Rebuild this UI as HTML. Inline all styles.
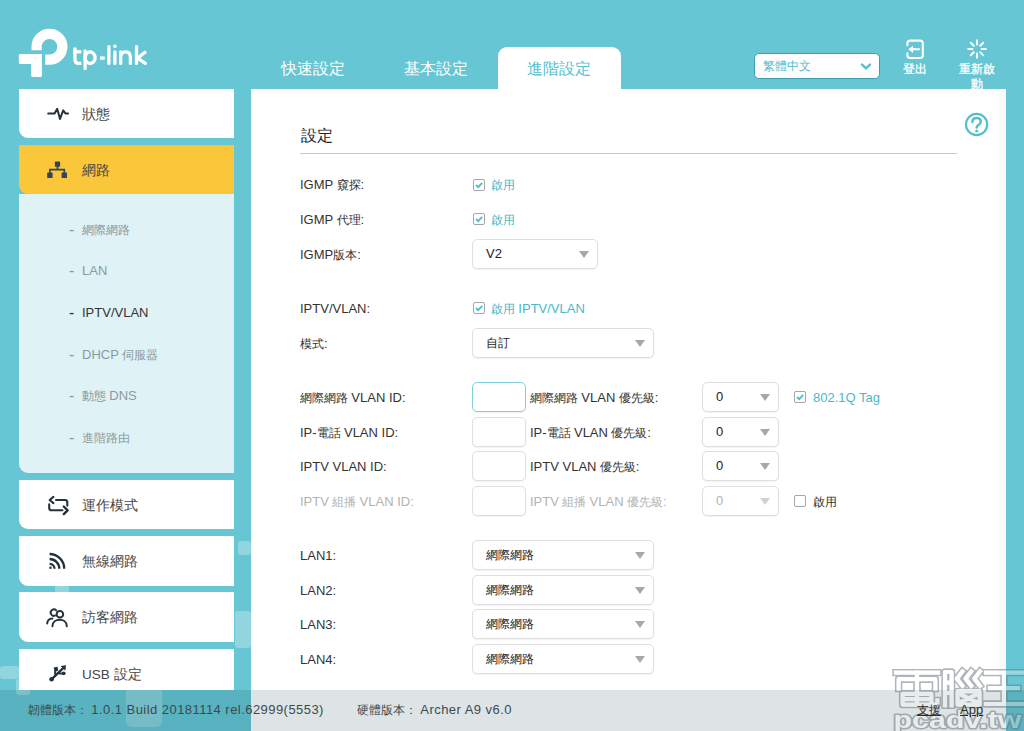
<!DOCTYPE html>
<html lang="zh-Hant">
<head>
<meta charset="utf-8">
<title>TP-Link Archer A9 - IPTV/VLAN</title>
<style>
*{box-sizing:border-box;margin:0;padding:0}
html,body{width:1024px;height:731px;overflow:hidden}
body{position:relative;background:#67c6d3;font-family:"Liberation Sans",sans-serif;font-size:12px;color:#333;line-height:1}
.abs{position:absolute}
.l{font-size:13px}
.c{display:inline-block;white-space:nowrap;text-align:justify;text-align-last:justify;text-justify:inter-character}
.hl{text-align:center;line-height:15px;font-size:12px;color:#fff;-webkit-text-stroke:.3px #fff}
.deco{position:absolute;background:rgba(255,255,255,.28);border-radius:3px}
.mi{position:absolute;left:19px;width:215px;height:49.75px;overflow:hidden;background:#fff;border-radius:0 0 0 9px}
.mi.on{background:#fbc73a}
.mi .tx{position:absolute;left:63px;top:0;height:50px;line-height:50px;font-size:14px;color:#464646;white-space:nowrap}
.mi .tx .l{font-size:13.5px}
.mi svg{position:absolute;overflow:visible}
.sub{position:absolute;left:19px;top:194.25px;width:215px;height:278.25px;background:#dff2f6;border-radius:0 0 0 9px}
.si{position:absolute;left:69px;height:20px;line-height:20px;font-size:12px;color:#8b9a9f;white-space:nowrap}
.si.on{color:#333}
.si b{font-weight:normal;display:inline-block;width:13px;font-size:16px;line-height:20px;vertical-align:top}
.tab{position:absolute;top:58px;height:22px;line-height:22px;font-size:16px;color:#fff;white-space:nowrap}
.tabon{position:absolute;left:497.5px;top:47px;width:123.5px;height:44px;background:#fff;border-radius:9px 9px 0 0}
.panel{position:absolute;left:251px;top:88.75px;width:755.25px;height:643px;background:#fff}
.lb{position:absolute;height:20px;line-height:20px;font-size:12px;color:#333;white-space:nowrap}
.lb.dis{color:#b3b3b3}
.lb.t{color:#49b9c8}
.cb{position:absolute;width:12px;height:12px;border:1px solid #a6a6a6;border-radius:2px;background:#fff}
.cb svg{position:absolute;left:0;top:0}
.sel{position:absolute;height:30px;border:1px solid #dfdfdf;border-radius:5px;background:#fff;box-shadow:0 1px 1px rgba(0,0,0,.05)}
.sel span.v{position:absolute;left:13px;top:0;line-height:28px;font-size:12px;color:#222;white-space:nowrap}
.sel i{position:absolute;right:8.3px;top:11px;width:0;height:0;border-left:5.5px solid transparent;border-right:5.5px solid transparent;border-top:7px solid #a8a8a8}
.sel.dis span.v{color:#b3b3b3}
.sel.dis i{border-top-color:#d2d2d2}
.inp{position:absolute;left:472px;width:54px;height:30px;border:1px solid #dfdfdf;border-radius:5px;background:#fff;box-shadow:0 1px 1px rgba(0,0,0,.05)}
.inp.f{border-color:#7fd1dc}
.foot{position:absolute;left:0;top:689.5px;width:1024px;height:41.5px;background:rgba(0,50,60,.13)}
.ft{position:absolute;top:700px;height:20px;line-height:20px;font-size:12px;color:#3c4a50;white-space:nowrap}
.ft .l{font-size:13px;letter-spacing:.45px}
.ft.lk,.ft.lk .c,.ft.lk .l{color:#2c2c2c;text-decoration:underline}
.ft.lk .l{letter-spacing:0}
</style>
</head>
<body>

<!-- decorative squares -->
<div class="deco" style="left:238px;top:541px;width:13px;height:14px"></div>
<div class="deco" style="left:54.5px;top:580px;width:14px;height:18px;border-radius:0"></div>
<div class="deco" style="left:235px;top:611px;width:16px;height:37px"></div>
<div class="deco" style="left:0;top:666px;width:19px;height:13px"></div>
<div class="deco" style="left:16px;top:679px;width:14px;height:16px"></div>
<div class="deco" style="left:126px;top:690px;width:36px;height:37px;border-radius:0 0 6px 6px;background:rgba(255,255,255,.22)"></div>

<!-- LOGO -->
<svg class="abs" style="left:0;top:0" width="160" height="88" viewBox="0 0 160 88">
  <g fill="none" stroke="#fff">
    <path d="M36.6 50.2 V46.7 A12.9 12.9 0 1 1 49.5 59.6 H45.2" stroke-width="10.2"/>
  </g>
  <path fill="#fff" d="M20.3 54 H41.9 V75.6 A1.5 1.5 0 0 1 40.4 77.1 H32.7 A1.5 1.5 0 0 1 31.2 75.6 V64 H20.3 A1.5 1.5 0 0 1 18.8 62.5 V55.5 A1.5 1.5 0 0 1 20.3 54 Z"/>
  <g fill="none" stroke="#fff" stroke-width="3.3" stroke-linecap="round" stroke-linejoin="round">
    <path d="M75 47.6 V59.5 Q75 63.4 79 63.4 H81.4" stroke-linecap="butt"/>
    <path d="M73.4 51.8 H81.4" stroke-linecap="butt"/>
    <path d="M85.1 51 V68.5"/>
    <path d="M85.1 57.6 A5 5.7 0 1 1 85.1 57.8" />
    <path d="M100 58.1 H104.8" stroke-linecap="butt"/>
    <path d="M108.9 46.6 V63.4"/>
    <path d="M114.9 52 V63.4"/>
    <path d="M120.7 52 V63.4 M120.7 57.5 Q120.7 51.9 125.6 51.9 Q130.4 51.9 130.4 57.5 V63.4"/>
    <path d="M136.5 46.6 V63.4 M145 52.2 L137.5 58.2 L145.3 63.4"/>
  </g>
  <circle cx="114.9" cy="46.3" r="1.8" fill="#fff"/>
</svg>

<!-- SIDEBAR -->
<div class="mi" style="top:88.75px;height:49.25px">
  <svg style="left:28px;top:17px" width="22" height="16" viewBox="46 106 22 16"><path d="M47.2 113.4 H53.6 L56.2 108.8 L59 119 L62.2 110.4 L64.4 113.4 H67.1" fill="none" stroke="#25323d" stroke-width="2" stroke-linejoin="round" stroke-linecap="round"/></svg>
  <div class="tx"><span class="c" style="width:28px">狀態</span></div>
</div>
<div class="mi on" style="top:145px;height:49.25px">
  <svg style="left:28px;top:16px" width="20" height="18" viewBox="47 161 20 18"><g fill="#33455a"><rect x="54.9" y="161.6" width="5.2" height="5.2" rx=".6"/><rect x="47.2" y="172.6" width="5.4" height="5.4" rx=".6"/><rect x="61.6" y="172.6" width="5.4" height="5.4" rx=".6"/></g><path d="M57.5 166 V169.6 M49.9 173 V169.6 H64.3 V173" fill="none" stroke="#33455a" stroke-width="1.7"/></svg>
  <div class="tx"><span class="c" style="width:28px">網路</span></div>
</div>
<div class="sub"></div>
<div class="si" style="top:219.5px"><b>-</b><span class="c" style="width:48px">網際網路</span></div>
<div class="si" style="top:261px"><b>-</b><span class="l">LAN</span></div>
<div class="si on" style="top:303px"><b>-</b><span class="l">IPTV/VLAN</span></div>
<div class="si" style="top:344.5px"><b>-</b><span class="l">DHCP</span> <span class="c" style="width:36px">伺服器</span></div>
<div class="si" style="top:386px"><b>-</b><span class="c" style="width:24px">動態</span> <span class="l">DNS</span></div>
<div class="si" style="top:427.5px"><b>-</b><span class="c" style="width:48px">進階路由</span></div>
<div class="mi" style="top:479.5px">
  <svg style="left:28px;top:15.5px" width="22" height="20" viewBox="47 495 22 20"><g fill="none" stroke="#25323d" stroke-width="2.1" stroke-linecap="round" stroke-linejoin="round"><path d="M53.4 496.9 L49.7 500 L53.4 503.1"/><path d="M56 500 H65 Q67.3 500 67.3 502.3 V505.6"/><path d="M49.2 504.4 V507.9 Q49.2 510.3 51.6 510.3 H62.4"/><path d="M63.8 506.5 L67.6 510.3 L63.8 514.1" stroke-width="2.4"/></g></svg>
  <div class="tx"><span class="c" style="width:56px">運作模式</span></div>
</div>
<div class="mi" style="top:535.75px">
  <svg style="left:30px;top:16px" width="17" height="18" viewBox="49 551.6 17 18"><g fill="none" stroke="#25323d" stroke-width="2.3"><path d="M49.6 553.6 A14.6 14.6 0 0 1 64.2 568.4"/><path d="M49.6 558.6 A9.7 9.7 0 0 1 59.3 568.4"/><path d="M49.6 563.5 A4.9 4.9 0 0 1 54.5 568.4"/></g><rect x="49.4" y="566.2" width="2.2" height="2.2" fill="#25323d"/></svg>
  <div class="tx"><span class="c" style="width:56px">無線網路</span></div>
</div>
<div class="mi" style="top:592px">
  <svg style="left:27px;top:16px" width="22" height="20" viewBox="46 608 22 20"><g fill="none" stroke="#25323d" stroke-width="2" stroke-linecap="round"><circle cx="59.9" cy="614.3" r="3.3"/><path d="M52.4 626.2 C52.8 617.6 66.6 617.6 66.8 626.2"/><path d="M56.2 610.4 A3.2 3.2 0 1 0 55 615.6"/><path d="M47.2 623.4 C47.4 620.6 49.6 618.8 52.4 618.6"/></g></svg>
  <div class="tx"><span class="c" style="width:56px">訪客網路</span></div>
</div>
<div class="mi" style="top:648.5px;height:41.5px;border-radius:0">
  <svg style="left:30px;top:16.5px" width="18" height="18" viewBox="49 665 18 18"><g fill="none" stroke="#25323d" stroke-width="2.3" stroke-linecap="round"><path d="M52 678.8 L63.2 668.2"/><path d="M55.4 675.4 Q54.6 671.6 55.9 669.8" stroke-width="2"/><path d="M58 673 Q61 673.9 63 673.3" stroke-width="2"/></g><circle cx="51.6" cy="679.3" r="2.3" fill="#25323d"/><path d="M60.6 665.9 L66 665.3 L65.4 670.7 Z" fill="#25323d"/><rect x="54" y="667.1" width="3.9" height="3.9" fill="#25323d" transform="rotate(-10 56 669)"/><circle cx="63.7" cy="673.3" r="1.9" fill="#25323d"/></svg>
  <div class="tx"><span class="l">USB</span> <span class="c" style="width:28px">設定</span></div>
</div>

<!-- CONTENT -->
<div class="panel"></div>
<div class="abs" style="left:999px;top:89px;width:7px;height:601px;background:#f8fafd"></div>
<div class="abs" style="left:301px;top:125px;height:22px;line-height:22px;font-size:16px;color:#222;white-space:nowrap"><span class="c" style="width:32px">設定</span></div>
<div class="abs" style="left:300px;top:153px;width:657px;height:1px;background:#c9c9c9"></div>
<svg class="abs" style="left:964px;top:112px" width="25" height="25" viewBox="0 0 25 25"><circle cx="12.6" cy="12.5" r="10.6" fill="#fff" stroke="#55bfcd" stroke-width="2.2"/><path d="M8.4 10 Q8.4 6 12.6 6 Q16.8 6 16.8 9.7 Q16.8 11.7 14.6 12.8 Q12.7 13.8 12.7 15.6" fill="none" stroke="#55bfcd" stroke-width="2.5" stroke-linecap="round"/><circle cx="12.7" cy="19" r="1.55" fill="#55bfcd"/></svg>
<div class="lb" style="left:300px;top:175px"><span class="l">IGMP</span> <span class="c" style="width:24px">窺探</span><span class="l">:</span></div>
<div class="cb" style="left:473px;top:179px"><svg width="10" height="10" viewBox="0 0 10 10"><path d="M2 5 L4.2 7.2 L8.2 2.8" fill="none" stroke="#4fbfce" stroke-width="1.9"/></svg></div>
<div class="lb t" style="left:491px;top:175px"><span class="c" style="width:24px">啟用</span></div>
<div class="lb" style="left:300px;top:210px"><span class="l">IGMP</span> <span class="c" style="width:24px">代理</span><span class="l">:</span></div>
<div class="cb" style="left:473px;top:213px"><svg width="10" height="10" viewBox="0 0 10 10"><path d="M2 5 L4.2 7.2 L8.2 2.8" fill="none" stroke="#4fbfce" stroke-width="1.9"/></svg></div>
<div class="lb t" style="left:491px;top:210px"><span class="c" style="width:24px">啟用</span></div>
<div class="lb" style="left:300px;top:245px"><span class="l">IGMP</span><span class="c" style="width:24px">版本</span><span class="l">:</span></div>
<div class="sel" style="left:472px;top:239px;width:126px"><span class="v"><span class="l">V2</span></span><i></i></div>
<div class="lb" style="left:300px;top:299px"><span class="l">IPTV/VLAN:</span></div>
<div class="cb" style="left:473px;top:302px"><svg width="10" height="10" viewBox="0 0 10 10"><path d="M2 5 L4.2 7.2 L8.2 2.8" fill="none" stroke="#4fbfce" stroke-width="1.9"/></svg></div>
<div class="lb t" style="left:491px;top:299px"><span class="c" style="width:24px">啟用</span> <span class="l">IPTV/VLAN</span></div>
<div class="lb" style="left:300px;top:334px"><span class="c" style="width:24px">模式</span><span class="l">:</span></div>
<div class="sel" style="left:472px;top:328px;width:182px"><span class="v"><span class="c" style="width:24px">自訂</span></span><i></i></div>
<div class="lb" style="left:300px;top:388px"><span class="c" style="width:48px">網際網路</span> <span class="l">VLAN ID:</span></div>
<div class="inp f" style="top:382px"></div>
<div class="lb" style="left:530px;top:388px"><span class="c" style="width:48px">網際網路</span> <span class="l">VLAN</span> <span class="c" style="width:36px">優先級</span><span class="l">:</span></div>
<div class="sel" style="left:702px;top:382px;width:77px"><span class="v"><span class="l">0</span></span><i></i></div>
<div class="lb" style="left:300px;top:423px"><span class="l">IP-</span><span class="c" style="width:24px">電話</span> <span class="l">VLAN ID:</span></div>
<div class="inp" style="top:417px"></div>
<div class="lb" style="left:530px;top:423px"><span class="l">IP-</span><span class="c" style="width:24px">電話</span> <span class="l">VLAN</span> <span class="c" style="width:36px">優先級</span><span class="l">:</span></div>
<div class="sel" style="left:702px;top:417px;width:77px"><span class="v"><span class="l">0</span></span><i></i></div>
<div class="lb" style="left:300px;top:457px"><span class="l">IPTV VLAN ID:</span></div>
<div class="inp" style="top:451px"></div>
<div class="lb" style="left:530px;top:457px"><span class="l">IPTV VLAN</span> <span class="c" style="width:36px">優先級</span><span class="l">:</span></div>
<div class="sel" style="left:702px;top:451px;width:77px"><span class="v"><span class="l">0</span></span><i></i></div>
<div class="lb dis" style="left:300px;top:492px"><span class="l">IPTV</span> <span class="c" style="width:24px">組播</span> <span class="l">VLAN ID:</span></div>
<div class="inp" style="top:486px"></div>
<div class="lb dis" style="left:530px;top:492px"><span class="l">IPTV</span> <span class="c" style="width:24px">組播</span> <span class="l">VLAN</span> <span class="c" style="width:36px">優先級</span><span class="l">:</span></div>
<div class="sel dis" style="left:702px;top:486px;width:77px"><span class="v"><span class="l">0</span></span><i></i></div>
<div class="cb" style="left:794px;top:391px"><svg width="10" height="10" viewBox="0 0 10 10"><path d="M2 5 L4.2 7.2 L8.2 2.8" fill="none" stroke="#4fbfce" stroke-width="1.9"/></svg></div>
<div class="lb t" style="left:813px;top:388px"><span class="l">802.1Q Tag</span></div>
<div class="cb" style="left:794px;top:495px"></div>
<div class="lb" style="left:813px;top:492px"><span class="c" style="width:24px">啟用</span></div>
<div class="lb" style="left:300px;top:546px"><span class="l">LAN1:</span></div>
<div class="sel" style="left:472px;top:540px;width:182px"><span class="v"><span class="c" style="width:48px">網際網路</span></span><i></i></div>
<div class="lb" style="left:300px;top:581px"><span class="l">LAN2:</span></div>
<div class="sel" style="left:472px;top:575px;width:182px"><span class="v"><span class="c" style="width:48px">網際網路</span></span><i></i></div>
<div class="lb" style="left:300px;top:615px"><span class="l">LAN3:</span></div>
<div class="sel" style="left:472px;top:609px;width:182px"><span class="v"><span class="c" style="width:48px">網際網路</span></span><i></i></div>
<div class="lb" style="left:300px;top:650px"><span class="l">LAN4:</span></div>
<div class="sel" style="left:472px;top:644px;width:182px"><span class="v"><span class="c" style="width:48px">網際網路</span></span><i></i></div>
<div class="foot"></div>
<div class="ft" style="left:28px"><span class="c" style="width:60px">韌體版本：</span> <span class="l">1.0.1 Build 20181114 rel.62999(5553)</span></div>
<div class="ft" style="left:357px"><span class="c" style="width:60px">硬體版本：</span> <span class="l">Archer A9 v6.0</span></div>

<!-- HEADER TABS -->
<div class="tab" style="left:281px"><span class="c" style="width:64px">快速設定</span></div>
<div class="tab" style="left:404px"><span class="c" style="width:64px">基本設定</span></div>
<div class="tabon"></div>
<div class="tab" style="left:527px;color:#55c0ce"><span class="c" style="width:64px">進階設定</span></div>

<!-- language select -->
<div class="abs" style="left:754px;top:53px;width:126px;height:26px;background:#fff;border:1px solid #3f9fae;border-radius:5px"></div>
<div class="abs" style="left:763px;top:57px;height:18px;line-height:18px;font-size:12px;color:#4fbccb;white-space:nowrap"><span class="c" style="width:48px">繁體中文</span></div>
<svg class="abs" style="left:859px;top:61.5px" width="14" height="10" viewBox="0 0 14 10"><path d="M3 2.6 L7 6.4 L11 2.6" fill="none" stroke="#55c0ce" stroke-width="2.4" stroke-linecap="round" stroke-linejoin="round"/></svg>

<!-- logout -->
<svg class="abs" style="left:904px;top:37px" width="24" height="24" viewBox="904 37 24 24"><g fill="none" stroke="#fff" stroke-width="2.1" stroke-linecap="round" stroke-linejoin="round"><path d="M907.4 45.2 V43.4 Q907.4 40.6 910.2 40.6 H920 Q922.8 40.6 922.8 43.4 V55.2 Q922.8 58 920 58 H910.2 Q907.4 58 907.4 55.2 V53.4"/><path d="M919 49.3 H912"/></g><path d="M908.3 49.3 L913 45.7 V52.9 Z" fill="#fff"/></svg>
<div class="abs hl" style="left:895px;top:61.5px;width:40px;height:15px"><span class="c" style="width:24px">登出</span></div>

<!-- reboot -->
<svg class="abs" style="left:964.7px;top:37.3px" width="24" height="24" viewBox="-12 -12 24 24"><g stroke="#fff" stroke-width="2" stroke-linecap="round"><path d="M0 -4.6 V-8.8"/><path d="M0 4.6 V8.8"/><path d="M-4.6 0 H-8.8"/><path d="M4.6 0 H8.8"/><path d="M3.25 -3.25 L6.2 -6.2"/><path d="M-3.25 -3.25 L-6.2 -6.2"/><path d="M-3.25 3.25 L-6.2 6.2"/><path d="M3.25 3.25 L6.2 6.2" opacity=".8"/></g></svg>
<div class="abs hl" style="left:956px;top:61.5px;width:41px"><span class="c" style="width:36px">重新啟</span><br><span class="c" style="width:12px">動</span></div>

<!-- watermark -->
<svg class="abs" style="left:884px;top:662px" width="140" height="69" viewBox="884 662 140 69">
  <defs>
    <g id="wm" fill="none" stroke-linejoin="round" stroke-linecap="square">
      <path d="M896 672.6 H938"/>
      <path d="M917 672.6 V688 M898.6 688.6 V679.2 H935.4 V688.6"/>
      <path d="M902.6 693.8 H931.4 V704.6 H902.6 Z M902.6 699.2 H931.4 M917 691.5 V704.6 H937.4 V700.4"/>
      <path d="M945 705.4 V672 H951.6 V705.4 M945 682.6 H951.6 M945 693 H951.6"/>
      <path d="M962.4 671.4 L956.8 678.6 L962.4 685.8 M971.2 671.4 L965.6 678.6 L971.2 685.8 M980 671.4 L974.4 678.6 L980 685.8"/>
      <path d="M957.6 691.4 H979.6 V704.6 H957.6 Z M961.6 695 L975.6 701.6 M975.6 695 L961.6 701.6"/>
      <path d="M986 672.6 H1022 M990 688.2 H1018 M986 704 H1022 M1004 672.6 V704"/>
    </g>
    <text id="wt" x="893.5" y="727.6" font-family="Liberation Sans, sans-serif" font-weight="bold" font-size="23.5" textLength="128" lengthAdjust="spacingAndGlyphs">pcadv.tw</text>
    <mask id="wmm" maskUnits="userSpaceOnUse" x="884" y="662" width="140" height="69">
      <rect x="884" y="662" width="140" height="69" fill="#fff"/>
      <use href="#wm" stroke="#000" stroke-width="4.2"/>
      <use href="#wt" fill="#000"/>
    </mask>
  </defs>
  <g mask="url(#wmm)" opacity=".55">
    <use href="#wm" stroke="#6f7a7f" stroke-width="7.4"/>
    <use href="#wt" fill="none" stroke="#6f7a7f" stroke-width="3" stroke-linejoin="round"/>
  </g>
  <g opacity=".3">
    <use href="#wm" stroke="#fff" stroke-width="4.2"/>
    <use href="#wt" fill="#fff"/>
  </g>
</svg>

<div class="ft lk" style="left:917px"><span class="c" style="width:24px">支援</span></div>
<div class="ft lk" style="left:960px"><span class="l">App</span></div>

</body>
</html>
